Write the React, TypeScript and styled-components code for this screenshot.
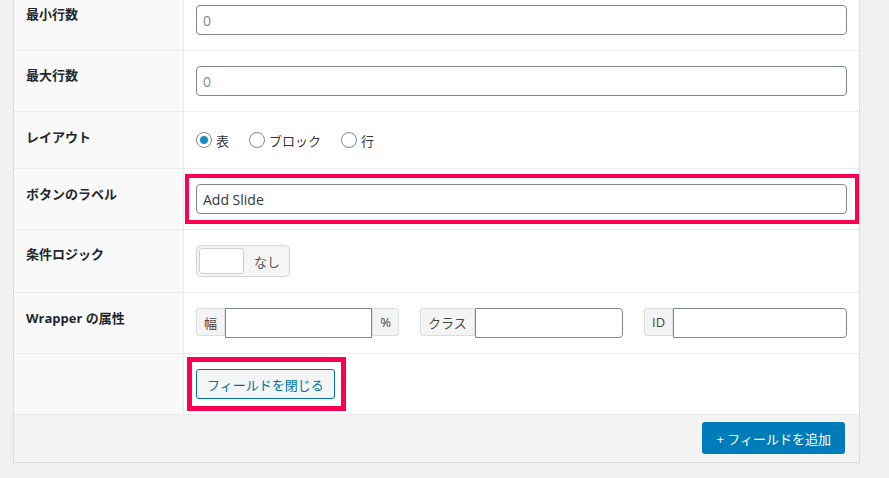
import React from "react";
import styled, {createGlobalStyle} from "styled-components";

const GlobalStyle = createGlobalStyle`
	body {
		margin: 0;
		background: #f1f1f1;
		font-family: "Open Sans", "Noto Sans CJK JP", sans-serif;
		color: #32373c;
	}
`;

// Page scrolled a little: the panel's top edge sits above the window
const Page = styled.div`
	margin-top: -11px;
	padding: 0 29px 20px 13px;
`;

const Panel = styled.div`
	background: #fff;
	border: 1px solid #dcdcde;
`;

const Row = styled.div`
	display: grid;
	grid-template-columns: 170px 1fr;
	border-bottom: 1px solid #eaeaea;
`;

const Label = styled.div<{$top?: number}>`
	background: #f9f9f9;
	border-right: 1px solid #eaeaea;
	padding: ${(p) => p.$top ?? 15}px 12px 12px;
	font-size: 13px;
	line-height: 1.4;
	font-weight: 700;
	color: #23282d;
`;

const Cell = styled.div`
	padding: 15px 12px;
	min-height: 0;
`;

const Marked = styled.div<{$t: number; $r: number; $b: number; $l: number; $w: number; $fit?: boolean}>`
	position: relative;
	display: block;
	width: ${(p) => (p.$fit ? "fit-content" : "auto")};

	&::after {
		content: "";
		position: absolute;
		top: -${(p) => p.$t}px;
		right: -${(p) => p.$r}px;
		bottom: -${(p) => p.$b}px;
		left: -${(p) => p.$l}px;
		border: ${(p) => p.$w}px solid #ff0050;
		pointer-events: none;
	}
`;

const TextInput = styled.input`
	box-sizing: border-box;
	display: block;
	width: 100%;
	height: 30px;
	margin: 0;
	padding: 0 6px;
	border: 1px solid #7e8993;
	border-radius: 4px;
	background: #fff;
	font-family: inherit;
	font-size: 14px;
	color: #32373c;
	outline: none;

	&::placeholder {
		color: #7e8993;
	}
`;

const RadioList = styled.div`
	display: flex;
	align-items: center;
	gap: 20px;
	height: 26px;
`;

const RadioItem = styled.label`
	display: flex;
	align-items: center;
	gap: 4px;
	font-size: 13px;
	color: #32373c;
`;

const RadioDot = styled.span<{$checked?: boolean}>`
	box-sizing: border-box;
	width: 16px;
	height: 16px;
	border-radius: 50%;
	border: 1px solid #7e8993;
	background: #fff;
	display: flex;
	align-items: center;
	justify-content: center;

	&::before {
		content: "";
		width: 8px;
		height: 8px;
		border-radius: 50%;
		background: ${(p) => (p.$checked ? "#1e8cbe" : "transparent")};
	}
`;

const Toggle = styled.div`
	box-sizing: border-box;
	display: flex;
	align-items: center;
	width: 94px;
	height: 32px;
	padding: 0 2px;
	border: 1px solid #d5d5d5;
	border-radius: 5px;
	background: #f5f5f5;
`;

const ToggleKnob = styled.span`
	box-sizing: border-box;
	width: 45px;
	height: 26px;
	background: #fff;
	border: 1px solid #cfcfcf;
	border-radius: 3px;
`;

const ToggleText = styled.span`
	margin-left: 10px;
	font-size: 13px;
	color: #555;
`;

const Groups = styled.div`
	display: grid;
	grid-template-columns: repeat(3, 1fr);
	gap: 21px;
`;

const Group = styled.div`
	display: flex;
	align-items: flex-start;
`;

const Addon = styled.span<{$side: "left" | "right"}>`
	box-sizing: border-box;
	flex: none;
	height: 28px;
	padding: 0 7px;
	display: flex;
	align-items: center;
	background: #f4f4f4;
	border: 1px solid #dddddd;
	border-radius: ${(p) => (p.$side === "left" ? "3px 0 0 3px" : "0 3px 3px 0")};
	font-size: 13px;
	color: #444;
`;

const GroupInput = styled(TextInput)<{$rounded?: boolean}>`
	flex: 1;
	min-width: 0;
	border-radius: ${(p) => (p.$rounded ? "0 4px 4px 0" : "0")};
`;

const CloseButton = styled.button`
	box-sizing: border-box;
	height: 30px;
	padding: 0 10px;
	border: 1px solid #0071a1;
	border-radius: 3px;
	background: #f3f5f6;
	font-family: inherit;
	font-size: 13px;
	color: #0071a1;
	cursor: pointer;
	display: block;
`;

const Footer = styled.div`
	background: #f4f4f4;
	padding: 7px 14px 8px;
	display: flex;
	justify-content: flex-end;
`;

const AddButton = styled.button`
	height: 32px;
	padding: 0 14px;
	border: none;
	border-radius: 3px;
	background: #007cba;
	font-family: inherit;
	font-size: 13px;
	color: #fff;
	cursor: pointer;
`;

const layouts = [
	{label: "表", checked: true},
	{label: "ブロック"},
	{label: "行"},
];

export default function App() {
	return (
		<>
			<GlobalStyle />
			<Page>
				<Panel>
					<Row>
						<Label>最小行数</Label>
						<Cell>
							<TextInput placeholder="0" />
						</Cell>
					</Row>
					<Row>
						<Label>最大行数</Label>
						<Cell>
							<TextInput placeholder="0" />
						</Cell>
					</Row>
					<Row>
						<Label $top={16}>レイアウト</Label>
						<Cell>
							<RadioList>
								{layouts.map((l) => (
									<RadioItem key={l.label}>
										<RadioDot $checked={l.checked} />
										{l.label}
									</RadioItem>
								))}
							</RadioList>
						</Cell>
					</Row>
					<Row>
						<Label $top={16}>ボタンのラベル</Label>
						<Cell>
							<Marked $t={10} $r={12} $b={10} $l={11} $w={4}>
								<TextInput defaultValue="Add Slide" />
							</Marked>
						</Cell>
					</Row>
					<Row>
						<Label>条件ロジック</Label>
						<Cell>
							<Toggle>
								<ToggleKnob />
								<ToggleText>なし</ToggleText>
							</Toggle>
						</Cell>
					</Row>
					<Row>
						<Label $top={16}>Wrapper の属性</Label>
						<Cell>
							<Groups>
								<Group>
									<Addon $side="left">幅</Addon>
									<GroupInput />
									<Addon $side="right">%</Addon>
								</Group>
								<Group>
									<Addon $side="left">クラス</Addon>
									<GroupInput $rounded />
								</Group>
								<Group>
									<Addon $side="left">ID</Addon>
									<GroupInput $rounded />
								</Group>
							</Groups>
						</Cell>
					</Row>
					<Row>
						<Label />
						<Cell>
							<Marked $t={12} $r={11} $b={12} $l={9} $w={5} $fit>
								<CloseButton>フィールドを閉じる</CloseButton>
							</Marked>
						</Cell>
					</Row>
					<Footer>
						<AddButton>+ フィールドを追加</AddButton>
					</Footer>
				</Panel>
			</Page>
		</>
	);
}
